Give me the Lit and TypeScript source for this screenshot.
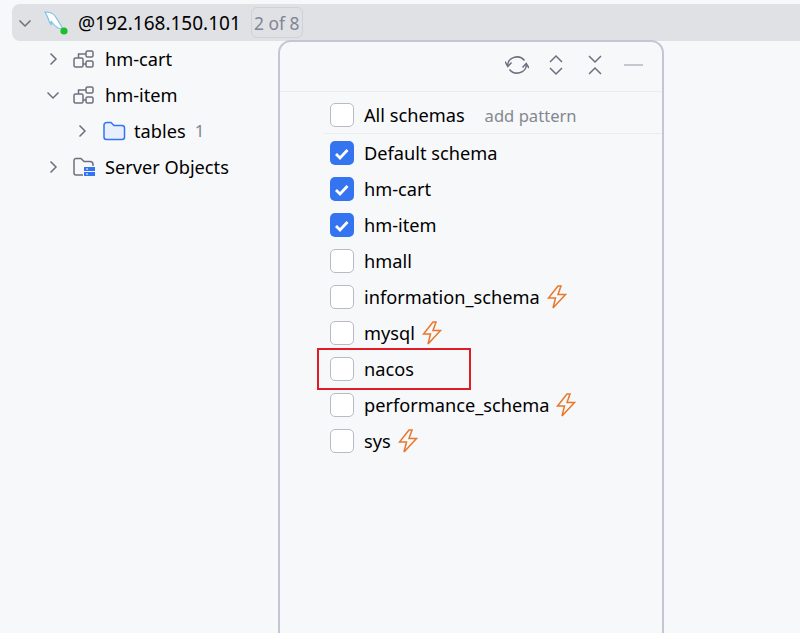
import { LitElement, html, css } from "lit";
import { customElement } from "lit/decorators.js";

const chevR = html`<svg class="chev" viewBox="0 0 16 16"><path d="M5.5 2.5 L11 8 L5.5 13.5" /></svg>`;
const chevD = html`<svg class="chev" viewBox="0 0 16 16"><path d="M2.5 5.5 L8 11 L13.5 5.5" /></svg>`;
const schemaIcon = html`<svg class="ic" viewBox="0 0 22 20" fill="none" stroke="#6c707e" stroke-width="1.5">
  <rect x="1" y="9" width="9" height="9" rx="1.5"/><rect x="13" y="2" width="7" height="6" rx="1.5"/><rect x="13" y="12" width="7" height="6" rx="1.5"/>
  <path d="M5.5 9V5H13M10 15H13"/></svg>`;
const bolt = html`<svg class="bolt" viewBox="0 0 20 24" fill="none" stroke="#e8772e" stroke-width="1.5" stroke-linejoin="miter">
  <path d="M11 1 L1.5 13 H8.5 L6 23 L18.5 9.5 H11 L14 1 Z"/></svg>`;

const rows: { name: string; checked?: boolean; bolt?: boolean }[] = [
  { name: "Default schema", checked: true },
  { name: "hm-cart", checked: true },
  { name: "hm-item", checked: true },
  { name: "hmall" },
  { name: "information_schema", bolt: true },
  { name: "mysql", bolt: true },
  { name: "nacos" },
  { name: "performance_schema", bolt: true },
  { name: "sys", bolt: true },
];

@customElement("app-root")
export class AppRoot extends LitElement {
  static styles = css`
    :host { display: block; position: relative; height: 633px; overflow: hidden; background: #f7f8fa;
      font-family: "Noto Sans", "Noto Sans CJK SC", sans-serif; font-size: 18.2px; color: #000; }
    .tree { padding-top: 4px; }
    .row { height: 36px; display: flex; align-items: center; white-space: nowrap; line-height: 36px; }
    .row.sel { height: 37px; margin-left: 12px; background: #dfe1e5; border-radius: 8px 0 0 8px; padding-left: 5px; }
    .ip { font-size: 19px; }
    .l1 { padding-left: 45px; }
    .l2 { padding-left: 74px; }
    .chev { width: 16px; height: 16px; fill: none; stroke: #6c707e; stroke-width: 1.5; flex: none; }
    .ic { width: 22px; height: 20px; flex: none; margin-left: 12px; margin-right: 10px; }
    .folder { width: 24px; height: 22px; flex: none; margin-left: 12px; margin-right: 8px; }
    .db { width: 26px; height: 26px; flex: none; margin-left: 10px; margin-right: 9px; }
    .count { color: #818594; margin-left: 9px; font-size: 17px; }
    .badge { margin-left: 10px; height: 31px; width: 52px; box-sizing: border-box; border: 1px solid #cfd1d8; border-radius: 6px;
      color: #818594; display: flex; align-items: center; justify-content: center; font-size: 17.4px; }
    .popup { position: absolute; left: 278px; top: 40px; width: 386px; height: 620px; box-sizing: border-box;
      border: 2px solid #c3c6d4; border-radius: 13px; background: #f7f8fa; }
    .head { height: 50px; box-sizing: border-box; border-bottom: 1px solid #ebecf0; display: flex; align-items: center;
      justify-content: flex-end; gap: 15px; padding-right: 16px; padding-bottom: 3px; }
    .tool { width: 24px; height: 24px; fill: none; stroke: #6c707e; stroke-width: 1.5; }
    .tool.min { stroke: #b4b8bf; }
    .list { padding-left: 50px; }
    .pop-row { height: 36px; display: flex; align-items: center; white-space: nowrap; }
    .all { height: 42px; margin-left: -6px; padding-left: 6px; padding-top: 5px; margin-bottom: 1px; border-bottom: 1px solid #ebecf0; box-sizing: border-box; }
    .box { width: 24px; height: 24px; box-sizing: border-box; border: 1.5px solid #b8bbc6; border-radius: 5px; background: #fff; flex: none; margin-right: 10px; }
    .box.on { background: #3574f0; border: none; }
    .box svg { display: block; width: 24px; height: 24px; fill: none; stroke: #fff; stroke-width: 2.8; }
    .hint { color: #858790; margin-left: 20px; font-size: 16.6px; }
    .bolt { width: 20px; height: 24px; margin-left: 7px; flex: none; }
    .mark { position: absolute; left: 37px; top: 306px; width: 154px; height: 42px; box-sizing: border-box; border: 2px solid #e01c26; }
  `;

  private box(on?: boolean) {
    return html`<span class="box ${on ? "on" : ""}">${on
      ? html`<svg viewBox="0 0 24 24"><path d="M6 13 L10 17 L17.500 9" /></svg>` : ""}</span>`;
  }

  render() {
    return html`
      <div class="tree">
        <div class="row sel">
          ${chevD}
          <svg class="db" viewBox="0 0 26 26">
            <path d="M2 2 C6 2 10 3 12 6 C14 9 15 10 17 14 L20 19 L15 18 C12 16 10 14 8 11 L8.500 15 L6.500 12 C5.500 9 4 5 2 2 Z" fill="#fff" stroke="#7cc3ea" stroke-width="1.2"/>
            <circle cx="21" cy="21" r="3.600" fill="#19c02a"/>
          </svg>
          <span class="ip">@192.168.150.101</span>
          <span class="badge">2 of 8</span>
        </div>
        <div class="row l1">${chevR}${schemaIcon}<span>hm-cart</span></div>
        <div class="row l1">${chevD}${schemaIcon}<span>hm-item</span></div>
        <div class="row l2">${chevR}
          <svg class="folder" viewBox="0 0 24 22"><path d="M2 5 a2.500 2.500 0 0 1 2.500 -2.500 H9 L12 5.500 H20 a2.500 2.500 0 0 1 2.500 2.500 V17 a2.500 2.500 0 0 1 -2.500 2.500 H4.500 A2.500 2.500 0 0 1 2 17 Z" fill="#e7effd" stroke="#3574f0" stroke-width="1.5"/></svg>
          <span>tables</span><span class="count">1</span></div>
        <div class="row l1">${chevR}
          <svg class="ic" viewBox="0 0 22 20" fill="none">
            <path d="M10 18 H3 a2 2 0 0 1 -2 -2 V3.500 a2 2 0 0 1 2 -2 H8 L11 4.500 H17 a3 3 0 0 1 3 3 V9" stroke="#6c707e" stroke-width="1.5"/>
            <rect x="11" y="10" width="11" height="4" fill="#3574f0"/><rect x="11" y="15" width="11" height="4" fill="#3574f0"/>
            <path d="M13 12h2M13 17h2" stroke="#fff" stroke-width="1"/>
          </svg>
          <span>Server Objects</span></div>
      </div>
      <div class="popup">
        <div class="head">
          <svg class="tool" viewBox="0 0 24 24"><path d="M2.500 12 A9.500 9 0 0 1 19.500 7.500 M21.500 12 A9.500 9 0 0 1 4.500 16.500 M0 8.500 L2.800 13.500 L6.500 9.500 M17.500 14.500 L21.200 10.500 L24 15"/></svg>
          <svg class="tool" viewBox="0 0 24 24"><path d="M6 9 L12 3 L18 9 M6 15 L12 21 L18 15"/></svg>
          <svg class="tool" viewBox="0 0 24 24"><path d="M6 3 L12 9 L18 3 M6 21 L12 15 L18 21"/></svg>
          <svg class="tool min" viewBox="0 0 24 24"><path d="M2 12 H21"/></svg>
        </div>
        <div class="list">
          <div class="pop-row all">${this.box()}<span>All schemas</span><span class="hint">add pattern</span></div>
          ${rows.map((r) => html`<div class="pop-row">${this.box(r.checked)}<span>${r.name}</span>${r.bolt ? bolt : ""}</div>`)}
        </div>
        <div class="mark"></div>
      </div>
    `;
  }
}
